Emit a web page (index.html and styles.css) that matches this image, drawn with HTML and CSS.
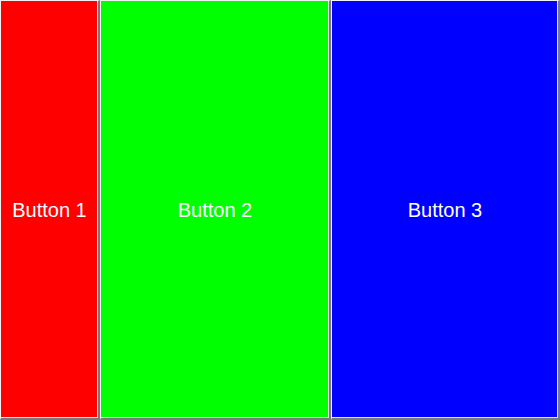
FILE: index.html
```html
<!DOCTYPE html>
<html>
<head>
<meta charset="utf-8">
<link rel="stylesheet" href="styles.css">
</head>
<body>
<div class="row">
  <div class="btn red">Button 1</div>
  <div class="btn green">Button 2</div>
  <div class="btn blue">Button 3</div>
</div>
</body>
</html>
```
FILE: styles.css
```css
html, body {
  margin: 0;
  padding: 0;
  background: #d9d9d9;
}
.row {
  display: flex;
  width: 560px;
  height: 420px;
}
.btn {
  box-sizing: border-box;
  height: 420px;
  display: flex;
  align-items: center;
  justify-content: center;
  color: #ffffff;
  font-family: "Liberation Sans", Arial, sans-serif;
  font-size: 20px;
  border-style: solid;
  border-width: 1px 2px 2px 1px;
  border-color: #f0f0f0 #7a7a7a #7a7a7a #f0f0f0;
  box-shadow: inset -1px -1px 0 #e4e4e4;
  padding-top: 1px;
}
.red {
  width: 100px;
  background: #ff0000;
}
.green {
  width: 231px;
  background: #00ff00;
}
.blue {
  width: 229px;
  background: #0000ff;
}
```
